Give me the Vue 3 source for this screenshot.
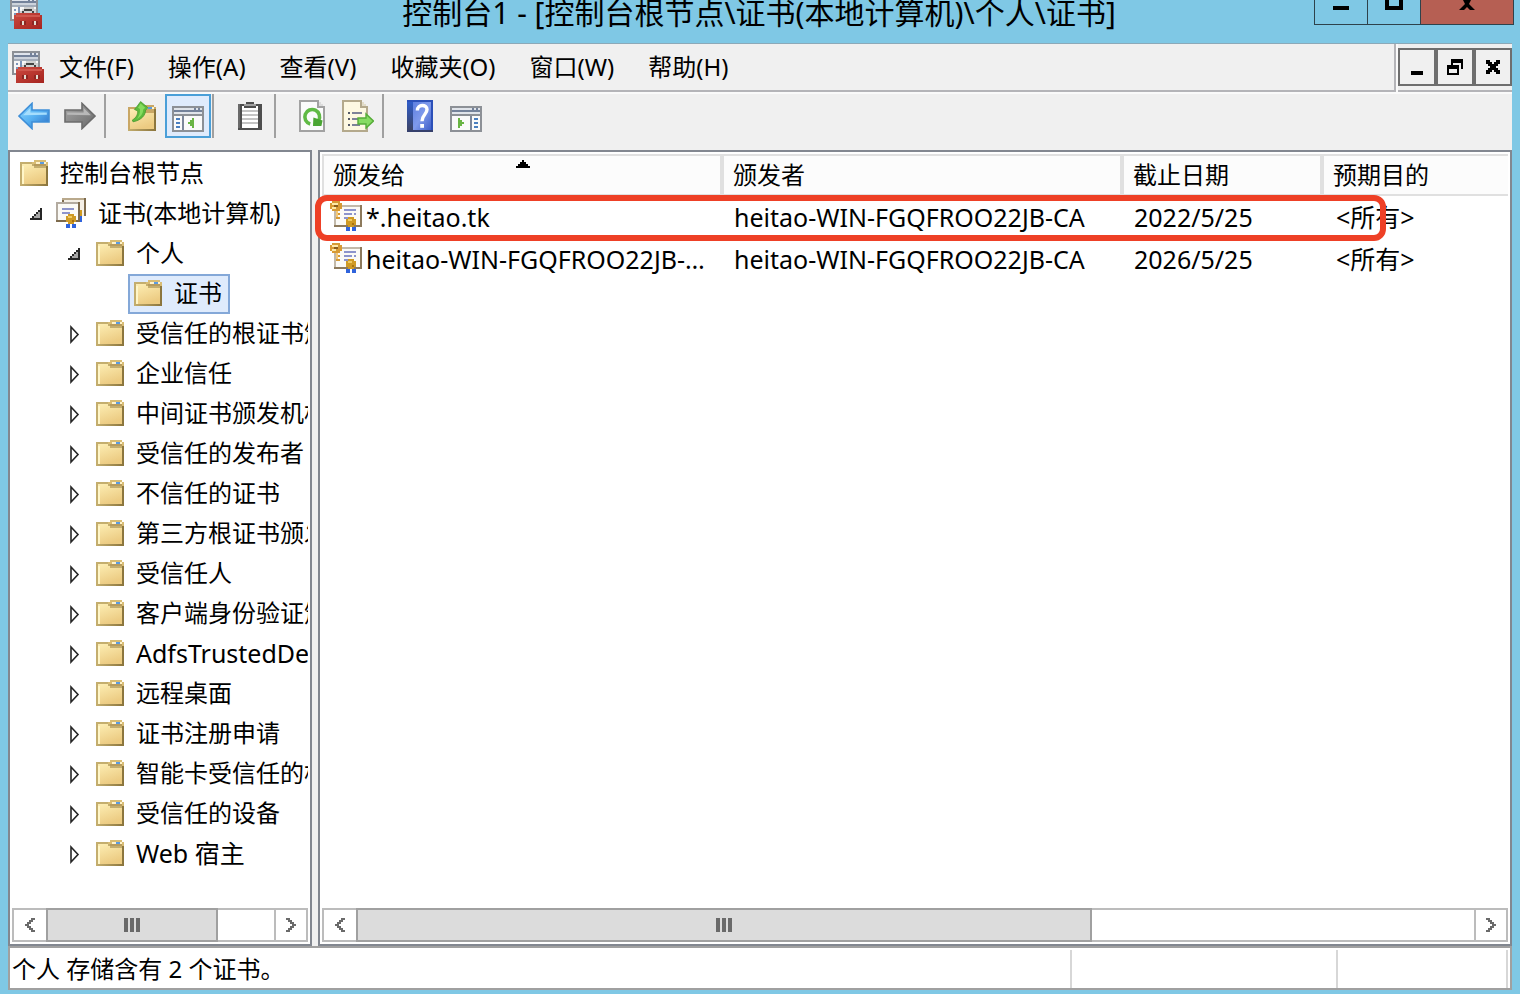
<template>
  <div class="window">
    <!-- Iconos compartidos -->
    <svg class="icon-defs" width="0" height="0" aria-hidden="true">
      <defs>
        <linearGradient id="gFolder" x1="0" y1="0" x2="0.4" y2="1">
          <stop offset="0" stop-color="#fdeeb4" />
          <stop offset="1" stop-color="#eccb82" />
        </linearGradient>
        <linearGradient id="gFolderEdge" x1="0" y1="0" x2="1" y2="0">
          <stop offset="0" stop-color="#c4ae6e" />
          <stop offset="1" stop-color="#8a743c" />
        </linearGradient>
        <linearGradient id="gBlue" x1="0" y1="0" x2="1" y2="1">
          <stop offset="0" stop-color="#8fd8ff" />
          <stop offset="0.5" stop-color="#58b2f2" />
          <stop offset="1" stop-color="#2a6cc4" />
        </linearGradient>
        <linearGradient id="gGray" x1="0" y1="0" x2="1" y2="1">
          <stop offset="0" stop-color="#a8a8a8" />
          <stop offset="1" stop-color="#686868" />
        </linearGradient>
        <linearGradient id="gRed" x1="0" y1="0" x2="1" y2="1">
          <stop offset="0" stop-color="#cc4a40" />
          <stop offset="1" stop-color="#a5241f" />
        </linearGradient>
        <linearGradient id="gHelp" x1="0" y1="0" x2="1" y2="1">
          <stop offset="0" stop-color="#5f80e0" />
          <stop offset="0.5" stop-color="#7f9aec" />
          <stop offset="1" stop-color="#3f5fc8" />
        </linearGradient>
        <linearGradient id="gSpine" x1="0" y1="0" x2="0" y2="1">
          <stop offset="0" stop-color="#2f5cc8" />
          <stop offset="1" stop-color="#3c4468" />
        </linearGradient>
      </defs>

      <symbol id="i-folder" viewBox="0 0 14 13">
        <path fill="#c4ae6e" d="M0 1h6v1h8v11H0z" />
        <path fill="url(#gFolder)" d="M1 2h5v1h1v1h6v8H1z" />
        <path fill="#fff6c8" d="M1 3h1v9H1z" />
        <path fill="url(#gFolderEdge)" d="M0 12h14v1H0zM13 3h1v10h-1z" />
        <path fill="#d8bc74" d="M7 0h6v1h1v2H7V2H6V1h1z" />
        <path fill="#fff3cc" d="M8 1h5v1H8z" />
        <path fill="#5b9be0" d="M10 1h2v1h-2z" />
        <path fill="#b79b5c" d="M7 2h6v1H7z" />
      </symbol>

      <symbol id="i-console" viewBox="0 0 16 16">
        <path fill="#8c9096" d="M0 0h14v12H0z" />
        <path fill="#dfe4ec" d="M1 1h12v1H1z" />
        <path fill="#74829a" d="M1 2h12v1H1zM9 1h1v1H9zM11 1h1v1h-1z" />
        <path fill="#cdd3dc" d="M1 3h12v1H1z" />
        <path fill="#a3acb9" d="M1 4h12v1H1z" />
        <path fill="#f6f6f6" d="M1 5h12v6H1z" />
        <path fill="#7c93b8" d="M2 6h1v1H2zM2 8h1v1H2zM4 5h1v3H4z" />
        <path fill="#d0d0d0" d="M5 7h1V6h1V5h5v1h1v2H5z" />
        <path fill="#444" d="M6 7h1V6h4v1h1v1h-1V7H7v1H6z" />
        <path fill="url(#gRed)" d="M3 8h12v1h1v7H2V9h1z" />
        <path fill="#cf584e" d="M3 9h12v1H3z" />
        <path fill="#8d2622" d="M5 12h3v2H5zM11 12h3v2h-3z" />
        <path fill="#e3dcd0" d="M6 12h1v2H6zM12 12h1v2h-1z" />
      </symbol>

      <symbol id="i-back" viewBox="0 0 16 14">
        <path fill="url(#gBlue)" stroke="#3f8fd8" stroke-width="0.8" d="M0.5 7L7 0.7V4h8.5v6H7v3.3z" />
        <path fill="#a6defd" d="M2.5 6.6L6.2 3v2.2h8.2v1.2z" />
      </symbol>

      <symbol id="i-forward" viewBox="0 0 16 14">
        <path fill="url(#gGray)" stroke="#6c6c6c" stroke-width="0.8" d="M15.5 7L9 0.7V4H0.5v6H9v3.3z" />
        <path fill="#b8b8b8" d="M13.5 6.6L9.8 3v2.2H1.6v1.2z" />
      </symbol>

      <symbol id="i-up" viewBox="0 0 14 15">
        <path fill="#c9a765" d="M0 3h7V2h6v1h1v12H0z" />
        <path fill="url(#gFolder)" d="M1 4h6v2h6v8H1z" />
        <path fill="#fff6c8" d="M8 3h5v1H8z" />
        <path fill="#5b9be0" d="M10 3h2v1h-2z" />
        <path fill="url(#gFolderEdge)" d="M0 14h14v1H0zM13 4h1v10h-1z" />
        <path fill="#5cba3c" stroke="#47992e" stroke-width="0.4" d="M6.3 0.3L10 3.4 8.8 4.5C8.8 7 6.8 9.6 2.5 10.4L2.2 9.5C4.4 8.2 4.8 6.6 4.9 5L3.2 4.2 4.6 2.6z" />
        <path fill="#86dc5e" d="M6.3 1.2L8.6 3.4 7.6 4.2C7.6 6.3 6.2 8 4.4 9 6 7.2 6 5.6 6 4L5 3.4z" />
      </symbol>

      <symbol id="i-tree-pane" viewBox="0 0 16 13">
        <path fill="#8c9096" d="M0 0h16v13H0z" />
        <path fill="#e0e4ea" d="M1 1h14v1H1zM1 3h14v1H1z" />
        <path fill="#74829a" d="M1 2h14v1H1zM11 1h1v1h-1zM13 1h1v1h-1z" />
        <path fill="#fafafa" d="M1 5h4v7H1zM6 5h9v7H6z" />
        <path fill="#7c869a" d="M5 5h1v7H5z" />
        <path fill="#4a7fc0" d="M2 6h2v1H2zM2 8h2v1H2zM2 10h2v1H2z" />
        <path fill="#6ab545" d="M8 8h1V7h1V6h1v5h-1v-1H9V9H8z" />
      </symbol>

      <symbol id="i-action-pane" viewBox="0 0 16 13">
        <path fill="#8c9096" d="M0 0h16v13H0z" />
        <path fill="#e0e4ea" d="M1 1h14v1H1zM1 3h14v1H1z" />
        <path fill="#74829a" d="M1 2h14v1H1zM11 1h1v1h-1zM13 1h1v1h-1z" />
        <path fill="#fafafa" d="M1 5h9v7H1zM11 5h4v7h-4z" />
        <path fill="#7c869a" d="M10 5h1v7h-1z" />
        <path fill="#4a7fc0" d="M12 6h2v1h-2zM12 8h2v1h-2zM12 10h2v1h-2z" />
        <path fill="#6ab545" d="M4 6h1v1h1v1h1v1H6v1H5v1H4z" />
      </symbol>

      <symbol id="i-clipboard" viewBox="0 0 12 14">
        <path fill="#4e4e4e" d="M0 1h12v13H0z" />
        <path fill="#6a6a6a" d="M0 1h1v12H0z" />
        <path fill="#fff" d="M2 2h8v11H2z" />
        <path fill="#c4c4c4" d="M2 4h8v1H2zM2 6h8v1H2zM2 8h8v1H2zM2 10h8v1H2z" />
        <path fill="#4e4e4e" d="M4 0h4v1h1v2H3V1h1z" />
        <path fill="#a0a0a0" d="M3 1h6v1H3z" />
      </symbol>

      <symbol id="i-refresh" viewBox="0 0 13 16">
        <path fill="#a2a2a2" d="M0 0h10v1h1v1h1v1h1v13H0z" />
        <path fill="#fbfbfb" d="M1 1h8v3h3v11H1z" />
        <path fill="#dcdcdc" d="M10 1v2h2V2h-1V1z" />
        <path fill="none" stroke="#60ba45" stroke-width="1.8" d="M5.6 12A3.7 3.7 0 1 1 9.8 10.3" />
        <path fill="#4aa533" d="M7.2 8.8L11.8 10.2 11.2 13H7z" />
      </symbol>

      <symbol id="i-export" viewBox="0 0 16 16">
        <path fill="#b4a98c" d="M0 0h10v1h1v1h1v1h1v13H0z" />
        <path fill="#fdf8e2" d="M1 1h8v3h3v11H1z" />
        <path fill="#e2dcc8" d="M10 1v2h2V2h-1V1z" />
        <path fill="#555a68" d="M3 6h1v1H3zM3 9h1v1H3zM3 12h1v1H3z" />
        <path fill="#7e8299" d="M5 6h5v1H5zM5 9h4v1H5zM5 12h4v1H5z" />
        <path fill="#86dc62" stroke="#56ac38" stroke-width="0.7" d="M8 9h4V7l3.7 3.5L12 14v-2H8z" />
      </symbol>

      <symbol id="i-help" viewBox="0 0 13 16">
        <path fill="#2c50b8" d="M0 0h13v16H0z" />
        <path fill="url(#gSpine)" d="M0 1h3v14H0z" />
        <path fill="url(#gHelp)" d="M3 1h9v14H3z" />
        <path fill="#35406c" d="M0 15h13v1H0z" />
        <path fill="none" stroke="#fff" stroke-width="1.7" d="M5.2 5.2C5.2 2 10 2 10 4.8 10 7.2 7.5 7.4 7.5 10.6" />
        <path fill="#fff" d="M6.6 12h1.9v1.9H6.6z" />
      </symbol>

      <symbol id="i-store" viewBox="0 0 15 15">
        <path fill="#7d6a4c" d="M3 0h12v9h-1V1H4v2H3z" />
        <path fill="#b9a98c" d="M3 0h11v1H3z" />
        <path fill="#f4efe6" d="M4 1h10v8H4z" />
        <path fill="#7d6a4c" d="M0 2h12v10H0z" />
        <path fill="#b3aba0" d="M0 2h11v1H1v8H0z" />
        <path fill="#fbfaf6" d="M1 3h10v8H1z" />
        <path fill="#8d94cc" d="M3 5h6v1H3zM3 7h4v1H3z" />
        <path fill="#d09a20" d="M12 6h1v4h-1z" />
        <path fill="#2f63dc" d="M12 9h1v3h-1zM5 13h2v2H5zM8 13h2v2H8z" />
        <path fill="#cf9a24" d="M6 8h3v1h1v3H9v1H6v-1H5V9h1z" />
        <path fill="#f0cb62" d="M6 9h2v1H6z" />
        <path fill="#a9720f" d="M8 11h1v1H8z" />
      </symbol>

      <symbol id="i-cert" viewBox="0 0 16 16">
        <path fill="#8d7a5c" d="M2 2h14v11H2z" />
        <path fill="#c2b9aa" d="M2 2h13v1H3v9H2z" />
        <path fill="#fbfaf6" d="M3 3h12v9H3z" />
        <path fill="#8d94cc" d="M7 4h6v1H7zM7 6h4v1H7zM12 6h1v1h-1zM7 8h2v1H7z" />
        <path fill="#d79a34" d="M1 0h4v1h1v3H5v1H4v1h1v1H4v1h1v1H3V5H1V4H0V1h1z" />
        <path fill="#fde9a8" d="M1 1h3v1H1zM1 3h2v1H1z" />
        <path fill="#8a5d1c" d="M2 2h2v1H2z" />
        <path fill="#f3c878" d="M3 5h1v3H3z" />
        <path fill="#2f63dc" d="M8 13h2v2H8zM11 13h2v2h-2z" />
        <path fill="#cf9a24" d="M9 8h3v1h1v3h-1v1H9v-1H8V9h1z" />
        <path fill="#f0cb62" d="M9 9h2v1H9z" />
        <path fill="#a9720f" d="M11 11h1v1h-1z" />
      </symbol>
    </svg>

    <header class="titlebar">
      <svg class="title-icon"><use href="#i-console" /></svg>
      <h1 class="title">控制台1 - [控制台根节点\证书(本地计算机)\个人\证书]</h1>
      <div class="caption">
        <button class="cap-btn" aria-label="最小化">
          <svg width="18" height="12" viewBox="0 0 18 12"><path d="M1 6h16v4H1z" /></svg>
        </button>
        <button class="cap-btn" aria-label="最大化">
          <svg width="18" height="12" viewBox="0 0 18 12"><path d="M0 0h4v6h10V0h4v10H0z" /></svg>
        </button>
        <button class="cap-btn close" aria-label="关闭">
          <svg width="18" height="12" viewBox="0 0 18 12"><path d="M5 0h8l-2 4 6 6h-5L9 7l-3 3H1l6-6z" /></svg>
        </button>
      </div>
    </header>

    <div class="menubar">
      <nav class="menus">
        <svg class="menu-icon"><use href="#i-console" /></svg>
        <button v-for="menu in menus" :key="menu" class="menu">{{ menu }}</button>
      </nav>
      <div class="mdi">
        <button class="mdi-btn" aria-label="最小化">
          <svg width="16" height="16" viewBox="0 0 8 8"><path d="M1 6h6v2H1z" /></svg>
        </button>
        <button class="mdi-btn" aria-label="还原">
          <svg width="16" height="16" viewBox="0 0 8 8"><path fill-rule="evenodd" d="M2 0h6v5H7V2H3v1H2zM0 3h6v5H0zM1 5v2h4V5z" /></svg>
        </button>
        <button class="mdi-btn" aria-label="关闭">
          <svg width="14" height="14" viewBox="0 0 7 7"><path d="M0 0h2v1H0zM5 0h2v1H5zM0 1h3v1H0zM4 1h3v1H4zM1 2h5v1H1zM2 3h3v1H2zM1 4h5v1H1zM0 5h3v1H0zM4 5h3v1H4zM0 6h2v1H0zM5 6h2v1H5z" /></svg>
        </button>
      </div>
    </div>

    <div class="toolbar">
      <template v-for="(group, i) in toolGroups" :key="i">
        <span v-if="i > 0" class="sep"></span>
        <button
          v-for="tool in group"
          :key="tool.icon"
          :class="['tool', { active: tool.icon === 'tree-pane' && treeVisible }]"
          :aria-label="tool.name"
          @click="runTool(tool)"
        >
          <svg :class="['tool-icon', tool.icon]"><use :href="'#i-' + tool.icon" /></svg>
        </button>
      </template>
    </div>

    <main class="panes">
      <aside v-if="treeVisible" class="pane tree-pane-box">
        <ul class="tree">
          <li v-for="node in nodes" :key="node.label" :class="['node', 'level-' + node.level]">
            <button v-if="node.state" class="toggle" :aria-label="node.label">
              <svg v-if="node.state === 'open'" width="12" height="12" viewBox="0 0 6 6">
                <path fill="#262626" d="M5 0h1v6H0V5h1V4h1V3h1V2h1V1h1z" />
                <path fill="#a6a6a6" d="M4 2h1v3H2V4h1V3h1z" />
              </svg>
              <svg v-else width="12" height="20" viewBox="0 0 12 20">
                <path fill="#fff" stroke="#262626" stroke-width="1.6" d="M3 3v15l7-7.5z" />
              </svg>
            </button>
            <button :class="['node-label', { selected: selected === node.label, latin: node.latin }]" @click="selected = node.label">
              <svg :class="['node-icon', { store: node.icon === 'store' }]"><use :href="'#i-' + (node.icon || 'folder')" /></svg>
              <span>{{ node.label }}</span>
            </button>
          </li>
        </ul>
        <div class="scrollbar">
          <button class="arrow" aria-label="向左滚动"><svg width="10" height="14" viewBox="0 0 5 7"><path d="M3 0h2v1H4v1H3v1H2v1h1v1h1v1h1v1H3V6H2V5H1V4H0V3h1V2h1V1h1z" /></svg></button>
          <div class="track"><div class="thumb" :style="{ width: '75.5%' }"><i></i><i></i><i></i></div></div>
          <button class="arrow" aria-label="向右滚动"><svg width="10" height="14" viewBox="0 0 5 7"><path d="M0 0h2v1h1v1h1v1h1v1H4v1H3v1H2v1H0V6h1V5h1V4h1V3H2V2H1V1H0z" /></svg></button>
        </div>
      </aside>

      <section class="pane list-pane">
        <table class="certs">
          <colgroup>
            <col class="c-name" />
            <col class="c-issuer" />
            <col class="c-date" />
            <col />
          </colgroup>
          <thead>
            <tr>
              <th>
                颁发给
                <svg class="sort" width="14" height="8" viewBox="0 0 7 4"><path d="M3 0h1v1h1v1h1v1h1v1H0V3h1V2h1V1h1z" /></svg>
              </th>
              <th>颁发者</th>
              <th>截止日期</th>
              <th>预期目的</th>
            </tr>
          </thead>
          <tbody>
            <tr v-for="cert in certs" :key="cert.name">
              <td>
                <div class="cert-name">
                  <svg class="cert-icon"><use href="#i-cert" /></svg>
                  <span>{{ cert.name }}</span>
                </div>
              </td>
              <td>{{ cert.issuer }}</td>
              <td>{{ cert.date }}</td>
              <td class="purpose">{{ cert.purpose }}</td>
            </tr>
          </tbody>
        </table>
        <div class="highlight"></div>
        <div class="scrollbar">
          <button class="arrow" aria-label="向左滚动"><svg width="10" height="14" viewBox="0 0 5 7"><path d="M3 0h2v1H4v1H3v1H2v1h1v1h1v1h1v1H3V6H2V5H1V4H0V3h1V2h1V1h1z" /></svg></button>
          <div class="track"><div class="thumb" :style="{ width: '65.8%' }"><i></i><i></i><i></i></div></div>
          <button class="arrow" aria-label="向右滚动"><svg width="10" height="14" viewBox="0 0 5 7"><path d="M0 0h2v1h1v1h1v1h1v1H4v1H3v1H2v1H0V6h1V5h1V4h1V3H2V2H1V1H0z" /></svg></button>
        </div>
      </section>
    </main>

    <footer class="statusbar">
      <span class="status-text">个人 存储含有 2 个证书。</span>
      <span class="status-cell wide"></span>
      <span class="status-cell"></span>
    </footer>
  </div>
</template>

<script setup>
import { ref } from 'vue';

const treeVisible = ref(true);
const selected = ref('证书');

const menus = ['文件(F)', '操作(A)', '查看(V)', '收藏夹(O)', '窗口(W)', '帮助(H)'];

const toolGroups = [
  [
    { icon: 'back', name: '后退' },
    { icon: 'forward', name: '前进' }
  ],
  [
    { icon: 'up', name: '上移一级' },
    { icon: 'tree-pane', name: '显示/隐藏控制台树' }
  ],
  [{ icon: 'clipboard', name: '粘贴' }],
  [
    { icon: 'refresh', name: '刷新' },
    { icon: 'export', name: '导出列表' }
  ],
  [
    { icon: 'help', name: '帮助' },
    { icon: 'action-pane', name: '显示/隐藏操作窗格' }
  ]
];

const nodes = [
  { label: '控制台根节点', level: 0 },
  { label: '证书(本地计算机)', level: 1, state: 'open', icon: 'store' },
  { label: '个人', level: 2, state: 'open' },
  { label: '证书', level: 3 },
  { label: '受信任的根证书颁发机构', level: 2, state: 'closed' },
  { label: '企业信任', level: 2, state: 'closed' },
  { label: '中间证书颁发机构', level: 2, state: 'closed' },
  { label: '受信任的发布者', level: 2, state: 'closed' },
  { label: '不信任的证书', level: 2, state: 'closed' },
  { label: '第三方根证书颁发机构', level: 2, state: 'closed' },
  { label: '受信任人', level: 2, state: 'closed' },
  { label: '客户端身份验证颁发者', level: 2, state: 'closed' },
  { label: 'AdfsTrustedDevices', level: 2, state: 'closed', latin: true },
  { label: '远程桌面', level: 2, state: 'closed' },
  { label: '证书注册申请', level: 2, state: 'closed' },
  { label: '智能卡受信任的根', level: 2, state: 'closed' },
  { label: '受信任的设备', level: 2, state: 'closed' },
  { label: 'Web 宿主', level: 2, state: 'closed', latin: true }
];

const certs = [
  { name: '*.heitao.tk', issuer: 'heitao-WIN-FGQFROO22JB-CA', date: '2022/5/25', purpose: '<所有>' },
  { name: 'heitao-WIN-FGQFROO22JB-CA', issuer: 'heitao-WIN-FGQFROO22JB-CA', date: '2026/5/25', purpose: '<所有>' }
];

// Solo el botón del árbol cambia la vista
const runTool = (tool) => {
  if (tool.icon === 'tree-pane') {
    treeVisible.value = !treeVisible.value;
  }
};
</script>

<style>
body {
  background: #7fc8e5;
}
</style>

<style scoped>
.window {
  box-sizing: border-box;
  min-height: 100vh;
  display: flex;
  flex-direction: column;
  padding: 0 8px 4px;
  overflow: hidden;
  background: #7fc8e5;
  color: #000;
  font-family: "Noto Sans", "Noto Sans CJK SC", sans-serif;
  font-size: 24px;
  line-height: 32px;
}

.window * {
  box-sizing: border-box;
}

button {
  margin: 0;
  padding: 0;
  border: 0;
  background: none;
  color: inherit;
  font: inherit;
}

svg {
  display: block;
  flex: none;
}

.icon-defs {
  position: absolute;
}

/* Barra de título */
.titlebar {
  display: flex;
  align-items: flex-end;
  height: 43px;
  padding-bottom: 14px;
}

.title-icon {
  width: 32px;
  height: 32px;
  margin-left: 2px;
}

.title {
  flex: 1;
  margin: 0;
  padding-left: 162px;
  text-align: center;
  font-size: 30px;
  font-weight: 400;
  line-height: 32px;
  white-space: nowrap;
}

.caption {
  align-self: flex-start;
  display: flex;
  margin-right: -2px;
}

.cap-btn {
  display: flex;
  justify-content: center;
  width: 54px;
  height: 25px;
  border: 1px solid #2e424b;
  border-top: 0;
}

.cap-btn + .cap-btn {
  margin-left: -1px;
}

.cap-btn.close {
  width: 94px;
  background: #b65f53;
}

/* Menú */
.menubar {
  display: flex;
  height: 51px;
  border-top: 1px solid #8ca9b8;
  background: #fafafa;
  padding-bottom: 2px;
}

.menus {
  flex: 1;
  display: flex;
  align-items: center;
  gap: 34px;
  padding-left: 4px;
  background: #f0f0f0;
  border-right: 2px solid #b4b4b8;
  border-bottom: 2px solid #b4b4b8;
}

.menu-icon {
  width: 32px;
  height: 32px;
  margin-right: -19px;
}

.menu {
  white-space: nowrap;
}

.mdi {
  display: flex;
  margin-left: 2px;
  padding: 4px 0;
  background: #f0f0f0;
  border-bottom: 2px solid #b4b4b8;
}

.mdi-btn {
  display: flex;
  align-items: center;
  justify-content: center;
  width: 38px;
  height: 38px;
  border: 2px solid #6e6e6e;
}

/* Barra de herramientas */
.toolbar {
  display: flex;
  height: 56px;
  padding: 0 3px 12px;
  background: #f0f0f0;
}

.tool {
  display: flex;
  align-items: center;
  justify-content: center;
  width: 46px;
  height: 44px;
}

.tool.active {
  border: 2px solid #4a9fd8;
  background: #dfebfc;
}

.sep {
  width: 2px;
  height: 44px;
  margin: 0 13px 0 1px;
  background: #a0a0a0;
}

.tool-icon {
  width: 32px;
  height: 32px;
}

.tool-icon.back,
.tool-icon.forward {
  height: 28px;
}

.tool-icon.up {
  width: 28px;
  height: 30px;
}

.tool-icon.tree-pane,
.tool-icon.action-pane {
  height: 26px;
  margin-top: 6px;
}

.tool-icon.clipboard {
  width: 24px;
  height: 28px;
}

.tool-icon.refresh,
.tool-icon.help {
  width: 26px;
}

/* Paneles */
.panes {
  flex: 1;
  display: flex;
  gap: 6px;
  background: #f0f0f0;
}

.pane {
  position: relative;
  display: flex;
  flex-direction: column;
  padding: 2px;
  border: 2px solid #828790;
  background: #fff;
}

.tree-pane-box {
  flex: none;
  width: 304px;
}

.list-pane {
  flex: 1;
  min-width: 0;
}

.tree {
  flex: 1;
  margin: 0;
  padding: 0;
  overflow: hidden;
  list-style: none;
}

.node {
  display: flex;
  align-items: center;
  height: 40px;
}

.level-0 {
  padding-left: 2px;
}

.level-1 {
  padding-left: 18px;
}

.level-2 {
  padding-left: 56px;
}

.level-3 {
  padding-left: 116px;
}

.toggle {
  flex: none;
  width: 22px;
}

.node-label {
  display: flex;
  align-items: center;
  gap: 12px;
  height: 40px;
  padding: 0 6px 2px 4px;
  border: 2px solid transparent;
  white-space: nowrap;
}

.node-label.selected {
  border-color: #84a8d8;
  background: #dfebfc;
}

.node-label.latin {
  font-size: 25px;
}

.node-icon {
  width: 28px;
  height: 26px;
}

.node-icon.store {
  width: 30px;
  height: 30px;
  margin-left: -2px;
}

/* Lista de certificados */
.certs {
  width: 100%;
  table-layout: fixed;
  border-collapse: separate;
  border-spacing: 0;
}

.c-name {
  width: 402px;
}

.c-issuer {
  width: 400px;
}

.c-date {
  width: 200px;
}

th {
  position: relative;
  height: 42px;
  padding: 0 0 0 9px;
  border: 2px solid #e0e0e0;
  border-left: 0;
  border-right-width: 4px;
  background: #fcfcfc;
  font-weight: 400;
  text-align: left;
}

th:first-child {
  border-left: 2px solid #e0e0e0;
}

th:last-child {
  border-right: 0;
}

.sort {
  position: absolute;
  top: 4px;
  left: calc(50% - 6px);
}

td {
  height: 42px;
  padding: 0 0 0 10px;
  font-size: 25px;
  white-space: nowrap;
}

td:first-child {
  padding: 0 12px 0 8px;
}

.purpose {
  padding-left: 12px;
}

.cert-name {
  display: flex;
  align-items: center;
  gap: 4px;
}

.cert-name span {
  overflow: hidden;
  text-overflow: ellipsis;
}

.cert-icon {
  width: 32px;
  height: 32px;
}

.highlight {
  position: absolute;
  top: 43px;
  right: 124px;
  left: -5px;
  height: 46px;
  border: 6px solid #ee4026;
  border-radius: 12px;
  pointer-events: none;
}

/* Barras de desplazamiento */
.scrollbar {
  display: flex;
  height: 34px;
  margin-top: auto;
  border: 2px solid #bcbcbc;
}

.arrow {
  display: flex;
  align-items: center;
  justify-content: center;
  width: 32px;
  fill: #6a6a6a;
}

.arrow:last-child {
  border-left: 2px solid #bcbcbc;
}

.track {
  flex: 1;
}

.thumb {
  display: flex;
  align-items: center;
  justify-content: center;
  gap: 2px;
  height: 34px;
  margin-top: -2px;
  border: 2px solid #a0a0a0;
  background: #dcdcdc;
}

.thumb i {
  width: 4px;
  height: 14px;
  background: #6a6a6a;
}

/* Barra de estado */
.statusbar {
  display: flex;
  height: 44px;
  padding: 2px 2px 0;
  border: 2px solid #a0a0a0;
  background: #fff;
}

.status-text {
  flex: 1;
  line-height: 38px;
}

.status-cell {
  width: 172px;
  border: solid #d7d7d7;
  border-width: 0 2px;
}

.status-cell.wide {
  width: 266px;
  border-right: 0;
}
</style>
